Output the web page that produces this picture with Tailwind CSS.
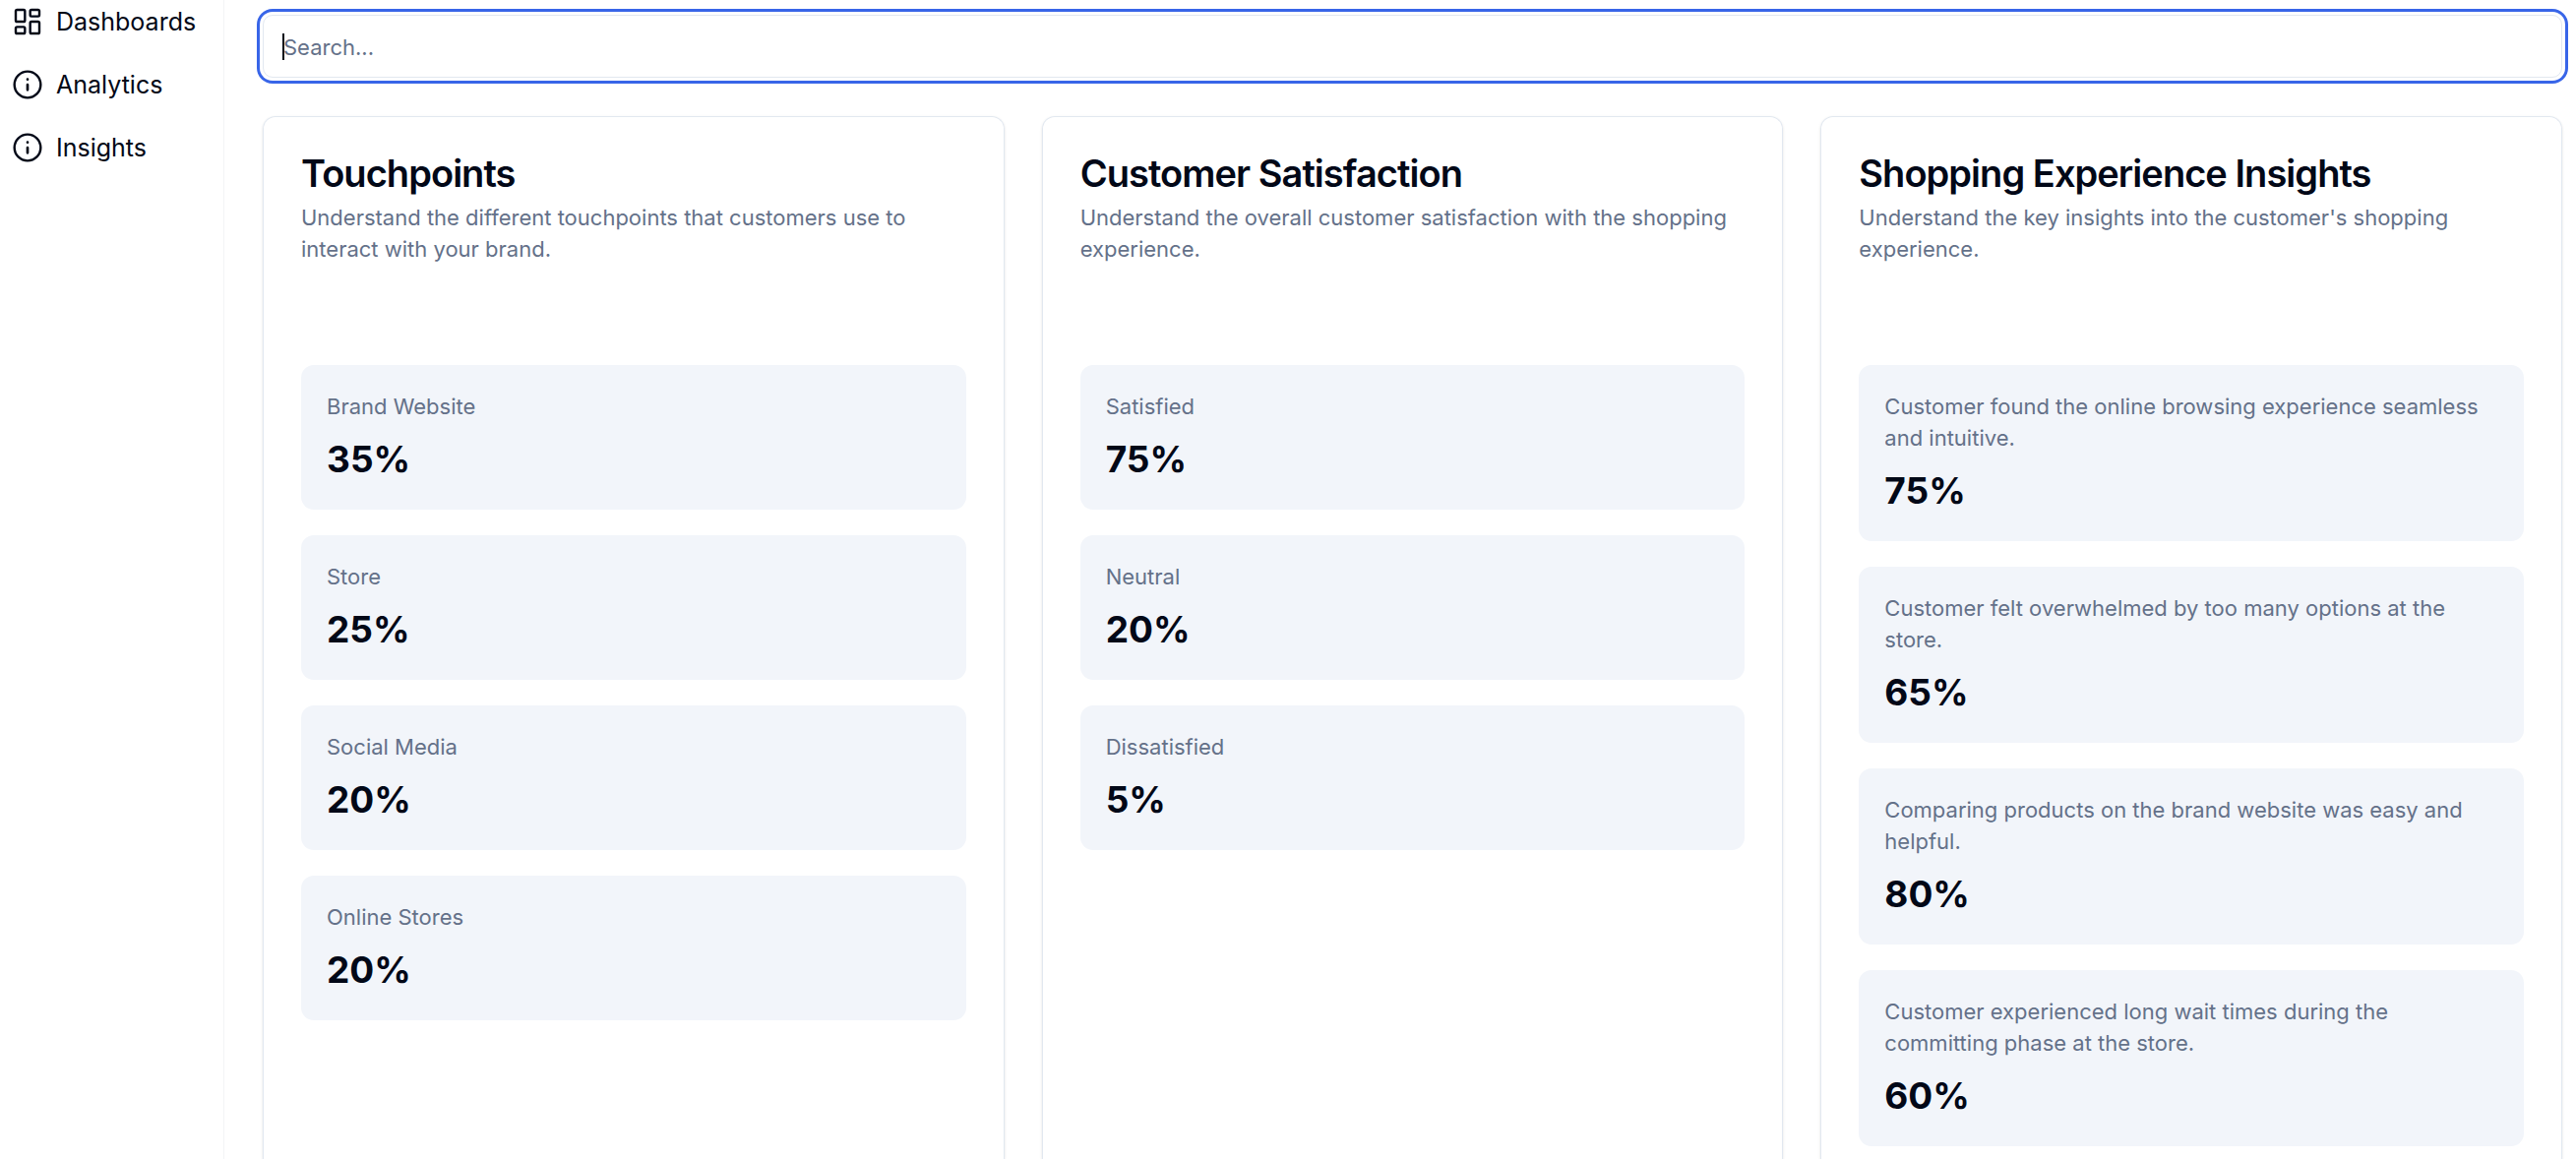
<!DOCTYPE html>
<html lang="en">
<head>
<meta charset="utf-8">
<title>Customer Insights</title>
<script src="https://cdn.jsdelivr.net/npm/@tailwindcss/browser@4"></script>
</head>
<body class="flex h-screen overflow-hidden bg-white font-[Inter,sans-serif] text-[#020817]">
  <nav class="w-[228px] shrink-0 border-r border-gray-100 pl-3">
    <ul class="flex flex-col gap-8 pt-[6px] text-[25px] leading-8">
      <li><a href="#" class="flex items-center gap-[13px]">
        <svg class="size-8 shrink-0" viewBox="0 0 24 24" fill="none" stroke="currentColor" stroke-width="1.8" stroke-linejoin="round"><rect x="3" y="3" width="7" height="9" rx="1"/><rect x="14" y="3" width="7" height="5" rx="1"/><rect x="14" y="12" width="7" height="9" rx="1"/><rect x="3" y="16" width="7" height="5" rx="1"/></svg>
        Dashboards</a></li>
      <li><a href="#" class="flex items-center gap-[13px]">
        <svg class="size-8 shrink-0" viewBox="0 0 24 24" fill="none" stroke="currentColor" stroke-width="1.8" stroke-linecap="round"><circle cx="12" cy="12" r="10"/><path stroke-width="2" d="M12 16v-4M12 8h.01"/></svg>
        Analytics</a></li>
      <li><a href="#" class="flex items-center gap-[13px]">
        <svg class="size-8 shrink-0" viewBox="0 0 24 24" fill="none" stroke="currentColor" stroke-width="1.8" stroke-linecap="round"><circle cx="12" cy="12" r="10"/><path stroke-width="2" d="M12 16v-4M12 8h.01"/></svg>
        Insights</a></li>
    </ul>
  </nav>
  <main class="flex min-w-0 grow flex-col gap-[39px] pt-[15px] pr-[14px] pl-[39px]">
    <div class="relative shrink-0">
      <input type="text" aria-label="Search" placeholder="Search..." class="block h-16 w-full rounded-[10px] border border-slate-200 bg-white px-5 pt-[2px] text-[22px] ring-3 ring-[#3865e8] ring-offset-3 ring-offset-white outline-none placeholder:text-[#647189]">
      <span class="absolute top-[19px] left-5 h-[27px] w-[2px] bg-[#020817]"></span>
    </div>
    <div class="grid grow grid-cols-3 gap-[38px]">
      <section class="rounded-t-[13px] border-x border-t border-slate-200 px-[38px] pt-[38px] shadow-sm">
        <h2 class="text-[38px] leading-[38px] font-semibold tracking-tight">Touchpoints</h2>
        <p class="mt-[10px] min-h-16 text-[22px] leading-8 text-[#647189]">Understand the different touchpoints that customers use to interact with your brand.</p>
        <dl class="mt-[102px] flex flex-col gap-[26px]">
          <div class="rounded-[13px] bg-[#f2f5fa] p-[26px]"><dt class="text-[22px] leading-8 text-[#647189]">Brand Website</dt><dd class="mt-3 text-[37px] leading-[51px] font-bold">35%</dd></div>
          <div class="rounded-[13px] bg-[#f2f5fa] p-[26px]"><dt class="text-[22px] leading-8 text-[#647189]">Store</dt><dd class="mt-3 text-[37px] leading-[51px] font-bold">25%</dd></div>
          <div class="rounded-[13px] bg-[#f2f5fa] p-[26px]"><dt class="text-[22px] leading-8 text-[#647189]">Social Media</dt><dd class="mt-3 text-[37px] leading-[51px] font-bold">20%</dd></div>
          <div class="rounded-[13px] bg-[#f2f5fa] p-[26px]"><dt class="text-[22px] leading-8 text-[#647189]">Online Stores</dt><dd class="mt-3 text-[37px] leading-[51px] font-bold">20%</dd></div>
        </dl>
      </section>
      <section class="rounded-t-[13px] border-x border-t border-slate-200 px-[38px] pt-[38px] shadow-sm">
        <h2 class="text-[38px] leading-[38px] font-semibold tracking-tight">Customer Satisfaction</h2>
        <p class="mt-[10px] min-h-16 text-[22px] leading-8 text-[#647189]">Understand the overall customer satisfaction with the shopping experience.</p>
        <dl class="mt-[102px] flex flex-col gap-[26px]">
          <div class="rounded-[13px] bg-[#f2f5fa] p-[26px]"><dt class="text-[22px] leading-8 text-[#647189]">Satisfied</dt><dd class="mt-3 text-[37px] leading-[51px] font-bold">75%</dd></div>
          <div class="rounded-[13px] bg-[#f2f5fa] p-[26px]"><dt class="text-[22px] leading-8 text-[#647189]">Neutral</dt><dd class="mt-3 text-[37px] leading-[51px] font-bold">20%</dd></div>
          <div class="rounded-[13px] bg-[#f2f5fa] p-[26px]"><dt class="text-[22px] leading-8 text-[#647189]">Dissatisfied</dt><dd class="mt-3 text-[37px] leading-[51px] font-bold">5%</dd></div>
        </dl>
      </section>
      <section class="rounded-t-[13px] border-x border-t border-slate-200 px-[38px] pt-[38px] shadow-sm">
        <h2 class="text-[38px] leading-[38px] font-semibold tracking-tight">Shopping Experience Insights</h2>
        <p class="mt-[10px] min-h-16 text-[22px] leading-8 text-[#647189]">Understand the key insights into the customer's shopping experience.</p>
        <dl class="mt-[102px] flex flex-col gap-[26px]">
          <div class="rounded-[13px] bg-[#f2f5fa] p-[26px]"><dt class="text-[22px] leading-8 text-[#647189]">Customer found the online browsing experience seamless and intuitive.</dt><dd class="mt-3 text-[37px] leading-[51px] font-bold">75%</dd></div>
          <div class="rounded-[13px] bg-[#f2f5fa] p-[26px]"><dt class="text-[22px] leading-8 text-[#647189]">Customer felt overwhelmed by too many options at the store.</dt><dd class="mt-3 text-[37px] leading-[51px] font-bold">65%</dd></div>
          <div class="rounded-[13px] bg-[#f2f5fa] p-[26px]"><dt class="text-[22px] leading-8 text-[#647189]">Comparing products on the brand website was easy and helpful.</dt><dd class="mt-3 text-[37px] leading-[51px] font-bold">80%</dd></div>
          <div class="rounded-[13px] bg-[#f2f5fa] p-[26px]"><dt class="text-[22px] leading-8 text-[#647189]">Customer experienced long wait times during the committing phase at the store.</dt><dd class="mt-3 text-[37px] leading-[51px] font-bold">60%</dd></div>
        </dl>
      </section>
    </div>
  </main>
</body>
</html>
